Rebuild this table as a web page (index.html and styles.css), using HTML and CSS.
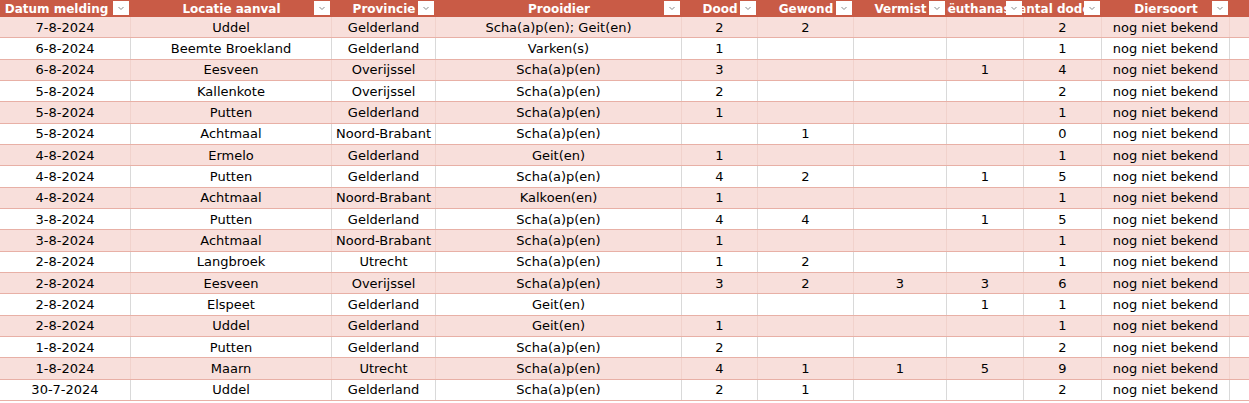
FILE: index.html
```html
<!DOCTYPE html>
<html lang="nl">
<head>
<meta charset="utf-8">
<title>Meldingen</title>
<link rel="stylesheet" href="styles.css">
</head>
<body>
<div class="sheet">
  <div class="row head">
    <div class="hc hc-fit"><span class="ht">Datum melding</span><span class="dd"><svg viewBox="0 0 16 14" width="16" height="14"><path d="M5.5 6 L8 8.5 L10.5 6" fill="none" stroke="#8a8a8a" stroke-width="1"/></svg></span></div>
    <div class="hc"><span class="ht">Locatie aanval</span><span class="dd"><svg viewBox="0 0 16 14" width="16" height="14"><path d="M5.5 6 L8 8.5 L10.5 6" fill="none" stroke="#8a8a8a" stroke-width="1"/></svg></span></div>
    <div class="hc"><span class="ht">Provincie</span><span class="dd"><svg viewBox="0 0 16 14" width="16" height="14"><path d="M5.5 6 L8 8.5 L10.5 6" fill="none" stroke="#8a8a8a" stroke-width="1"/></svg></span></div>
    <div class="hc"><span class="ht">Prooidier</span><span class="dd"><svg viewBox="0 0 16 14" width="16" height="14"><path d="M5.5 6 L8 8.5 L10.5 6" fill="none" stroke="#8a8a8a" stroke-width="1"/></svg></span></div>
    <div class="hc"><span class="ht">Dood</span><span class="dd"><svg viewBox="0 0 16 14" width="16" height="14"><path d="M5.5 6 L8 8.5 L10.5 6" fill="none" stroke="#8a8a8a" stroke-width="1"/></svg></span></div>
    <div class="hc"><span class="ht">Gewond</span><span class="dd"><svg viewBox="0 0 16 14" width="16" height="14"><path d="M5.5 6 L8 8.5 L10.5 6" fill="none" stroke="#8a8a8a" stroke-width="1"/></svg></span></div>
    <div class="hc"><span class="ht">Vermist</span><span class="dd"><svg viewBox="0 0 16 14" width="16" height="14"><path d="M5.5 6 L8 8.5 L10.5 6" fill="none" stroke="#8a8a8a" stroke-width="1"/></svg></span></div>
    <div class="hc"><span class="ht">Geëuthanaseerd</span><span class="dd"><svg viewBox="0 0 16 14" width="16" height="14"><path d="M5.5 6 L8 8.5 L10.5 6" fill="none" stroke="#8a8a8a" stroke-width="1"/></svg></span></div>
    <div class="hc hc-fit"><span class="ht">Aantal doden</span><span class="dd"><svg viewBox="0 0 16 14" width="16" height="14"><path d="M5.5 6 L8 8.5 L10.5 6" fill="none" stroke="#8a8a8a" stroke-width="1"/></svg></span></div>
    <div class="hc"><span class="ht">Diersoort</span><span class="dd"><svg viewBox="0 0 16 14" width="16" height="14"><path d="M5.5 6 L8 8.5 L10.5 6" fill="none" stroke="#8a8a8a" stroke-width="1"/></svg></span></div>
    <div class="hc"></div>
  </div>

  <div class="row band"><div class="c">7-8-2024</div><div class="c">Uddel</div><div class="c">Gelderland</div><div class="c">Scha(a)p(en); Geit(en)</div><div class="c">2</div><div class="c">2</div><div class="c"></div><div class="c"></div><div class="c">2</div><div class="c">nog niet bekend</div><div class="c"></div></div>
  <div class="row"><div class="c">6-8-2024</div><div class="c">Beemte Broekland</div><div class="c">Gelderland</div><div class="c">Varken(s)</div><div class="c">1</div><div class="c"></div><div class="c"></div><div class="c"></div><div class="c">1</div><div class="c">nog niet bekend</div><div class="c"></div></div>
  <div class="row band"><div class="c">6-8-2024</div><div class="c">Eesveen</div><div class="c">Overijssel</div><div class="c">Scha(a)p(en)</div><div class="c">3</div><div class="c"></div><div class="c"></div><div class="c">1</div><div class="c">4</div><div class="c">nog niet bekend</div><div class="c"></div></div>
  <div class="row"><div class="c">5-8-2024</div><div class="c">Kallenkote</div><div class="c">Overijssel</div><div class="c">Scha(a)p(en)</div><div class="c">2</div><div class="c"></div><div class="c"></div><div class="c"></div><div class="c">2</div><div class="c">nog niet bekend</div><div class="c"></div></div>
  <div class="row band"><div class="c">5-8-2024</div><div class="c">Putten</div><div class="c">Gelderland</div><div class="c">Scha(a)p(en)</div><div class="c">1</div><div class="c"></div><div class="c"></div><div class="c"></div><div class="c">1</div><div class="c">nog niet bekend</div><div class="c"></div></div>
  <div class="row"><div class="c">5-8-2024</div><div class="c">Achtmaal</div><div class="c">Noord-Brabant</div><div class="c">Scha(a)p(en)</div><div class="c"></div><div class="c">1</div><div class="c"></div><div class="c"></div><div class="c">0</div><div class="c">nog niet bekend</div><div class="c"></div></div>
  <div class="row band"><div class="c">4-8-2024</div><div class="c">Ermelo</div><div class="c">Gelderland</div><div class="c">Geit(en)</div><div class="c">1</div><div class="c"></div><div class="c"></div><div class="c"></div><div class="c">1</div><div class="c">nog niet bekend</div><div class="c"></div></div>
  <div class="row"><div class="c">4-8-2024</div><div class="c">Putten</div><div class="c">Gelderland</div><div class="c">Scha(a)p(en)</div><div class="c">4</div><div class="c">2</div><div class="c"></div><div class="c">1</div><div class="c">5</div><div class="c">nog niet bekend</div><div class="c"></div></div>
  <div class="row band"><div class="c">4-8-2024</div><div class="c">Achtmaal</div><div class="c">Noord-Brabant</div><div class="c">Kalkoen(en)</div><div class="c">1</div><div class="c"></div><div class="c"></div><div class="c"></div><div class="c">1</div><div class="c">nog niet bekend</div><div class="c"></div></div>
  <div class="row"><div class="c">3-8-2024</div><div class="c">Putten</div><div class="c">Gelderland</div><div class="c">Scha(a)p(en)</div><div class="c">4</div><div class="c">4</div><div class="c"></div><div class="c">1</div><div class="c">5</div><div class="c">nog niet bekend</div><div class="c"></div></div>
  <div class="row band"><div class="c">3-8-2024</div><div class="c">Achtmaal</div><div class="c">Noord-Brabant</div><div class="c">Scha(a)p(en)</div><div class="c">1</div><div class="c"></div><div class="c"></div><div class="c"></div><div class="c">1</div><div class="c">nog niet bekend</div><div class="c"></div></div>
  <div class="row"><div class="c">2-8-2024</div><div class="c">Langbroek</div><div class="c">Utrecht</div><div class="c">Scha(a)p(en)</div><div class="c">1</div><div class="c">2</div><div class="c"></div><div class="c"></div><div class="c">1</div><div class="c">nog niet bekend</div><div class="c"></div></div>
  <div class="row band"><div class="c">2-8-2024</div><div class="c">Eesveen</div><div class="c">Overijssel</div><div class="c">Scha(a)p(en)</div><div class="c">3</div><div class="c">2</div><div class="c">3</div><div class="c">3</div><div class="c">6</div><div class="c">nog niet bekend</div><div class="c"></div></div>
  <div class="row"><div class="c">2-8-2024</div><div class="c">Elspeet</div><div class="c">Gelderland</div><div class="c">Geit(en)</div><div class="c"></div><div class="c"></div><div class="c"></div><div class="c">1</div><div class="c">1</div><div class="c">nog niet bekend</div><div class="c"></div></div>
  <div class="row band"><div class="c">2-8-2024</div><div class="c">Uddel</div><div class="c">Gelderland</div><div class="c">Geit(en)</div><div class="c">1</div><div class="c"></div><div class="c"></div><div class="c"></div><div class="c">1</div><div class="c">nog niet bekend</div><div class="c"></div></div>
  <div class="row"><div class="c">1-8-2024</div><div class="c">Putten</div><div class="c">Gelderland</div><div class="c">Scha(a)p(en)</div><div class="c">2</div><div class="c"></div><div class="c"></div><div class="c"></div><div class="c">2</div><div class="c">nog niet bekend</div><div class="c"></div></div>
  <div class="row band"><div class="c">1-8-2024</div><div class="c">Maarn</div><div class="c">Utrecht</div><div class="c">Scha(a)p(en)</div><div class="c">4</div><div class="c">1</div><div class="c">1</div><div class="c">5</div><div class="c">9</div><div class="c">nog niet bekend</div><div class="c"></div></div>
  <div class="row"><div class="c">30-7-2024</div><div class="c">Uddel</div><div class="c">Gelderland</div><div class="c">Scha(a)p(en)</div><div class="c">2</div><div class="c">1</div><div class="c"></div><div class="c"></div><div class="c">2</div><div class="c">nog niet bekend</div><div class="c"></div></div>
</div>
</body>
</html>
```

FILE: styles.css
```css
* { box-sizing: border-box; }

html, body {
  margin: 0;
  padding: 0;
  background: #ffffff;
}

body {
  font-family: "DejaVu Sans", Verdana, sans-serif;
  font-size: 13px;
  color: #000000;
  overflow: hidden;
}

.sheet {
  width: 1249px;
  display: flex;
  flex-direction: column;
}

.row {
  display: grid;
  grid-template-columns: 131px 201px 104px 246px 76px 96px 93px 77px 78px 128px 1fr;
  height: 21.33px;
  border-bottom: 1px solid #e8b0a6;
  background: #ffffff;
}

.row.band {
  background: #f8dfdb;
}

.row.head {
  height: 17px;
  background: #c95b46;
  border-bottom: none;
}

.c {
  display: flex;
  align-items: center;
  justify-content: center;
  white-space: nowrap;
  overflow: hidden;
  border-right: 1px solid #d9d9d9;
  line-height: 1;
}

.row.band .c {
  border-right-color: #f1d2cc;
}

.c:last-child {
  border-right: none;
}

.hc {
  position: relative;
  display: flex;
  align-items: center;
  justify-content: center;
  overflow: hidden;
  white-space: nowrap;
  color: #ffffff;
  font-weight: bold;
  font-size: 12px;
  line-height: 1;
}

.hc-fit {
  padding-right: 18px;
}

.ht {
  flex: none;
}

.dd {
  position: absolute;
  right: 2px;
  top: 1px;
  width: 16px;
  height: 14px;
  background: #ffffff;
  display: flex;
}
```
